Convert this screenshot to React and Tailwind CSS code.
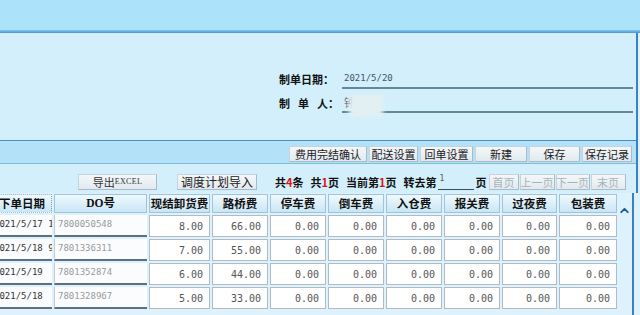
import React from 'react';
import { ChevronUp } from 'lucide-react';

// toolbar buttons, widths measured from the screen
const toolbarButtons = [
  { label: '费用完结确认', w: 'w-[78px]' },
  { label: '配送设置', w: 'w-[49px]' },
  { label: '回单设置', w: 'w-[53px]' },
  { label: '新建', w: 'w-[52px]' },
  { label: '保存', w: 'w-[51px]' },
  { label: '保存记录', w: 'w-[50px]' },
];

const pageButtons = [
  { label: '首页', w: 'w-[30px]' },
  { label: '上一页', w: 'w-[35px]' },
  { label: '下一页', w: 'w-[34px]' },
  { label: '末页', w: 'w-[35px]' },
];

const feeCols = [
  { title: '现结卸货费', w: 'w-[61px]' },
  { title: '路桥费', w: 'w-[56px]' },
  { title: '停车费', w: 'w-[56px]' },
  { title: '倒车费', w: 'w-[56px]' },
  { title: '入仓费', w: 'w-[56px]' },
  { title: '报关费', w: 'w-[56px]' },
  { title: '过夜费', w: 'w-[55px]' },
  { title: '包装费', w: 'w-[58px]' },
];

const rows = [
  { date: '2021/5/17 1', no: '7800050548', fees: ['8.00', '66.00', '0.00', '0.00', '0.00', '0.00', '0.00', '0.00'] },
  { date: '2021/5/18 9', no: '7801336311', fees: ['7.00', '55.00', '0.00', '0.00', '0.00', '0.00', '0.00', '0.00'] },
  { date: '2021/5/19', no: '7801352874', fees: ['6.00', '44.00', '0.00', '0.00', '0.00', '0.00', '0.00', '0.00'] },
  { date: '2021/5/18', no: '7801328967', fees: ['5.00', '33.00', '0.00', '0.00', '0.00', '0.00', '0.00', '0.00'] },
];

const btn = 'h-[16px] flex items-center justify-center bg-linear-to-b from-[#f4f7f9] to-[#e2eaef] border border-[#c6d4dd] border-r-[#a9bac6] border-b-[#a9bac6] text-[11px] leading-none text-[#222] whitespace-nowrap';

const headCell = 'h-[19px] flex items-center justify-center bg-linear-to-b from-[#f0f9fe] to-[#c8e6f6] border border-[#9fc3d8] text-[11.5px] font-bold text-[#111] whitespace-nowrap';

export default function App() {
  return (
    <div className="w-[640px] h-[315px] overflow-hidden bg-[#ddf2fc] font-['Noto_Sans_CJK_SC',sans-serif] text-[#111]">
      {/* barra superior */}
      <div className="h-[30px] bg-[#ade2fb]" />
      <div className="h-[3px] bg-linear-to-b from-[#82c6f2] to-[#4a95d5]" />

      <div className="w-[638px] border-r-2 border-[#3d7fbf] bg-[#d3effc]">
        {/* cabecera del formulario */}
        <div className="h-[107px] pt-[37px] pl-[279px] pr-[3px] flex flex-col gap-[5px]">
          <div className="h-[19px] flex items-center">
            <span className="w-[63px] text-[11px] font-bold">制单日期：</span>
            <div className="flex-1 h-full flex items-center pl-[2px] border-b-2 border-[#62889c] font-['DejaVu_Sans_Mono',monospace] text-[9px] text-[#445566]">
              2021/5/20
            </div>
          </div>
          <div className="h-[19px] flex items-center">
            <span className="w-[63px] flex gap-[8px] text-[11px] font-bold">
              <span>制</span>
              <span>单</span>
              <span>人：</span>
            </span>
            <div className="flex-1 h-full flex items-center pl-[2px] border-b-2 border-[#62889c] text-[11px] text-[#667]">
              <span>钟</span>
              <span className="inline-block w-[34px] h-[22px] -ml-[6px] mt-[6px] bg-[#e2f0f1] blur-[2px]" />
            </div>
          </div>
        </div>

        {/* barra de botones */}
        <div className="h-[24px] border-t border-[#4a8cc2] border-b border-b-[#80badd] bg-[#b2e1f8] flex items-end justify-end gap-[2px] pr-[4px] pb-[1px]">
          {toolbarButtons.map((b) => (
            <button key={b.label} className={`${btn} ${b.w}`}>{b.label}</button>
          ))}
        </div>

        {/* paginacion */}
        <div className="h-[29px] flex items-end pb-[3px] pl-[78px]">
          <button className={`${btn} w-[79px] text-[#333]`}>
            导出<span className="text-[8px] font-['Liberation_Serif',serif] tracking-[0.3px]">EXCEL</span>
          </button>
          <button className={`${btn} w-[80px] ml-[20px] text-[12px]`}>调度计划导入</button>
          <div className="ml-[18px] h-[16px] flex items-center gap-[7px] text-[11px] font-bold">
            <span>共<span className="text-[#e01010]">4</span>条</span>
            <span>共<span className="text-[#e01010]">1</span>页</span>
            <span>当前第<span className="text-[#e01010]">1</span>页</span>
            <span className="flex items-center">
              转去第
              <span className="w-[36px] h-[16px] ml-[1px] border-b border-[#3c4c58] font-['DejaVu_Sans_Mono',monospace] text-[8px] font-normal text-[#555] leading-[10px] pl-[2px]">1</span>
              <span className="ml-[2px]">页</span>
            </span>
          </div>
          <div className="ml-[2px] flex gap-[1px]">
            {pageButtons.map((b) => (
              <button key={b.label} className={`${btn} ${b.w} text-[#a8b3ba]`}>{b.label}</button>
            ))}
          </div>
        </div>
      </div>

      {/* tabla */}
      <div className="w-[634px] h-[122px] border-r-2 border-[#3d7fbf] flex">
        <div className="flex-1 overflow-hidden pt-[1px]">
          <div className="-ml-[8px] flex flex-col gap-[2px]">
            <div className="flex gap-[2px]">
              <div className={`${headCell} w-[60px] border-r-[#8a9ba6] border-dotted`}>下单日期</div>
              <div className={`${headCell} w-[93px] font-['Liberation_Serif','Noto_Sans_CJK_SC',serif]`}>DO号</div>
              {feeCols.map((c) => (
                <div key={c.title} className={`${headCell} ${c.w}`}>{c.title}</div>
              ))}
            </div>
            {rows.map((r) => (
              <div key={r.no} className="flex gap-[2px]">
                <div className="w-[60px] h-[22px] bg-[#fbfcfd] border-b-2 border-[#5d7080] flex items-center pl-[2px] overflow-hidden whitespace-nowrap font-['DejaVu_Sans_Mono',monospace] text-[9px] text-[#333]">
                  {r.date}
                </div>
                <div className="w-[93px] h-[22px] bg-[#fbfcfd] border-l border-l-[#c4ccd2] border-b-2 border-b-[#5d7080] flex items-center pl-[3px] font-['DejaVu_Sans_Mono',monospace] text-[9px] text-[#9a9a9a]">
                  {r.no}
                </div>
                {r.fees.map((f, i) => (
                  <div key={i} className={`${feeCols[i].w} h-[22px] bg-white border border-[#afbcc5] flex items-center justify-end pr-[6px] font-['DejaVu_Sans_Mono',monospace] text-[10px] text-[#555]`}>
                    {f}
                  </div>
                ))}
              </div>
            ))}
          </div>
        </div>
        {/* scroll */}
        <div className="w-[15px] flex justify-center pt-[11px]">
          <ChevronUp size={13} strokeWidth={3.5} className="text-[#1d5c9c]" />
        </div>
      </div>
    </div>
  );
}
